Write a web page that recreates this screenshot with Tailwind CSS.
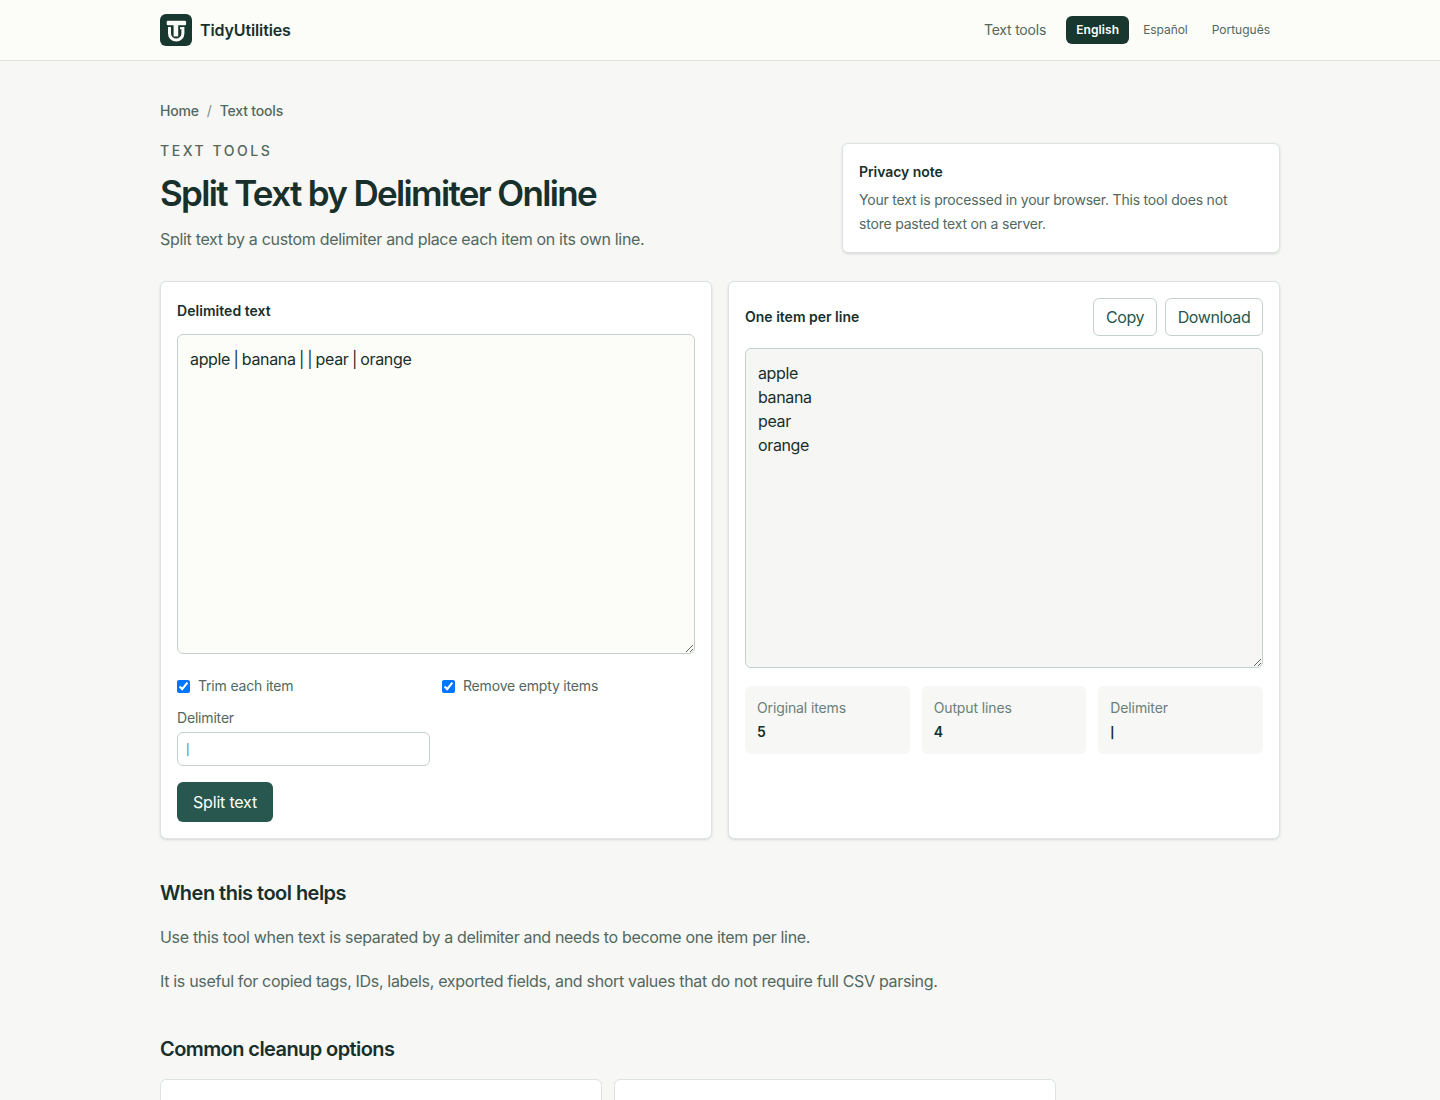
<!DOCTYPE html>
<html lang="en">
  <head>
    <meta charset="UTF-8" />
    <meta name="viewport" content="width=device-width, initial-scale=1" />
    <title>Split Text by Delimiter Online | TidyUtilities</title>
    <script src="https://cdn.jsdelivr.net/npm/@tailwindcss/browser@4"></script>
  </head>
  <body class="h-[1100px] overflow-hidden bg-[#f7f7f5] font-['Inter','Liberation_Sans',sans-serif] text-[#18302b]">
    <header class="border-b border-[#dce3e0] bg-[#fcfcf8]">
      <div class="mx-auto flex h-15 max-w-[1120px] items-center justify-between">
        <a href="#" class="flex items-center gap-2 font-semibold tracking-[-0.12px]">
          <svg class="size-8" viewBox="0 0 32 32" fill="none">
            <rect width="32" height="32" rx="6" fill="#18372f" />
            <path d="M9.5 13v6.4a6.7 6.7 0 0 0 13.4 0V13" stroke="#fcfcf8" stroke-width="3" />
            <path d="M20 14.2h3" stroke="#fcfcf8" stroke-width="2" />
            <path d="M15.9 9v13.4" stroke="#fcfcf8" stroke-width="4.6" />
            <rect x="6.7" y="6.8" width="19.4" height="4.4" rx="1.2" fill="#fcfcf8" />
          </svg>
          TidyUtilities
        </a>
        <div class="flex items-center">
          <a href="#" class="mr-5 text-sm tracking-[-0.2px] text-[#526860]">Text tools</a>
          <nav class="flex gap-1 text-xs text-[#526860]">
            <a href="#" class="w-[63px] rounded-md bg-[#18372f] px-2.5 py-1.5 font-semibold tracking-[0.1px] text-white">English</a>
            <a href="#" class="px-2.5 py-1.5 tracking-[-0.06px]">Español</a>
            <a href="#" class="px-2.5 py-1.5">Português</a>
          </nav>
        </div>
      </div>
    </header>

    <main class="mx-auto max-w-[1120px] pt-10">
      <nav class="mb-5 flex gap-2 text-sm font-medium tracking-[-0.18px] text-[#526860]">
        <a href="#">Home</a>
        <span class="font-normal text-[#7b8d86]">/</span>
        <a href="#">Text tools</a>
      </nav>

      <div class="grid grid-cols-[1fr_438px] items-end">
        <div>
          <p class="text-sm font-medium tracking-[2.55px] text-[#526860] uppercase">Text tools</p>
          <h1 class="mt-3 text-[35px] leading-10 font-semibold tracking-[-1.66px]">Split Text by Delimiter Online</h1>
          <p class="mt-3 leading-7 tracking-[-0.32px] text-[#526860]">Split text by a custom delimiter and place each item on its own line.</p>
        </div>
        <aside class="rounded-md border border-[#dce3e0] bg-white p-4 text-sm leading-6 shadow-sm">
          <p class="font-semibold tracking-[-0.06px]">Privacy note</p>
          <p class="mt-1 tracking-[-0.2px] text-[#526860]">Your text is processed in your browser. This tool does not<br />store pasted text on a server.</p>
        </aside>
      </div>

      <div class="mt-7 grid grid-cols-2 gap-4">
        <section class="rounded-md border border-[#dce3e0] bg-white p-4 shadow-sm">
          <label for="source" class="block pt-px text-sm leading-[23px] font-semibold tracking-[0.04px]">Delimited text</label>
          <textarea id="source" class="mt-3 block h-80 w-full resize-y rounded-md border border-[#c5cfcb] bg-[#fcfcf8] p-3 leading-6 tracking-[-0.34px] [word-spacing:-0.8px]">apple | banana | | pear | orange</textarea>
          <div class="mt-[22px] grid grid-cols-2 gap-3 text-sm tracking-[-0.18px] text-[#526860]">
            <label class="flex items-center gap-2"><input type="checkbox" class="size-[13px]" checked />Trim each item</label>
            <label class="flex items-center gap-2"><input type="checkbox" class="size-[13px]" checked />Remove empty items</label>
            <label>
              <span class="block">Delimiter</span>
              <input type="text" value="|" class="mt-1 block h-[34px] w-full rounded-md border border-[#c5cfcb] bg-white px-2 pt-0.5 text-[11px]" />
            </label>
          </div>
          <button class="mt-4 block h-10 w-24 rounded-md bg-[#27574e] tracking-[-0.2px] text-white">Split text</button>
        </section>

        <section class="rounded-md border border-[#dce3e0] bg-white p-4 shadow-sm">
          <div class="flex items-center justify-between">
            <label for="result" class="text-sm font-semibold">One item per line</label>
            <div class="flex gap-2 tracking-[-0.4px] text-[#27574e]">
              <button class="h-[38px] w-16 rounded-md border border-[#c5cfcb]">Copy</button>
              <button class="h-[38px] w-[98px] rounded-md border border-[#c5cfcb]">Download</button>
            </div>
          </div>
          <textarea id="result" readonly class="mt-3 block h-80 w-full resize-y rounded-md border border-[#c5cfcb] bg-[#f6f7f5] p-3 leading-6 tracking-[-0.36px]">apple
banana
pear
orange</textarea>
          <dl class="mt-[18px] grid grid-cols-3 gap-3 text-sm tracking-[-0.12px]">
            <div class="rounded-md bg-[#f7f7f6] p-3">
              <dt class="text-[#6b7f77]">Original items</dt>
              <dd class="mt-1 font-semibold">5</dd>
            </div>
            <div class="rounded-md bg-[#f7f7f6] p-3">
              <dt class="text-[#6b7f77]">Output lines</dt>
              <dd class="mt-1 font-semibold">4</dd>
            </div>
            <div class="rounded-md bg-[#f7f7f6] p-3">
              <dt class="text-[#6b7f77]">Delimiter</dt>
              <dd class="mt-1 pt-0.5 text-[11px] leading-[18px] font-bold">|</dd>
            </div>
          </dl>
        </section>
      </div>

      <section class="mt-10 max-w-4xl">
        <h2 class="text-xl font-semibold tracking-[-0.53px]">When this tool helps</h2>
        <div class="mt-4 space-y-4 leading-7 tracking-[-0.325px] text-[#526860]">
          <p>Use this tool when text is separated by a delimiter and needs to become one item per line.</p>
          <p>It is useful for copied tags, IDs, labels, exported fields, and short values that do not require full CSV parsing.</p>
        </div>
      </section>

      <section class="mt-10 max-w-4xl">
        <h2 class="text-xl font-semibold tracking-[-0.58px]">Common cleanup options</h2>
        <div class="mt-4 grid grid-cols-2 gap-3">
          <div class="h-28 rounded-md border border-[#dce3e0] bg-white"></div>
          <div class="h-28 rounded-md border border-[#dce3e0] bg-white"></div>
        </div>
      </section>
    </main>
  </body>
</html>
